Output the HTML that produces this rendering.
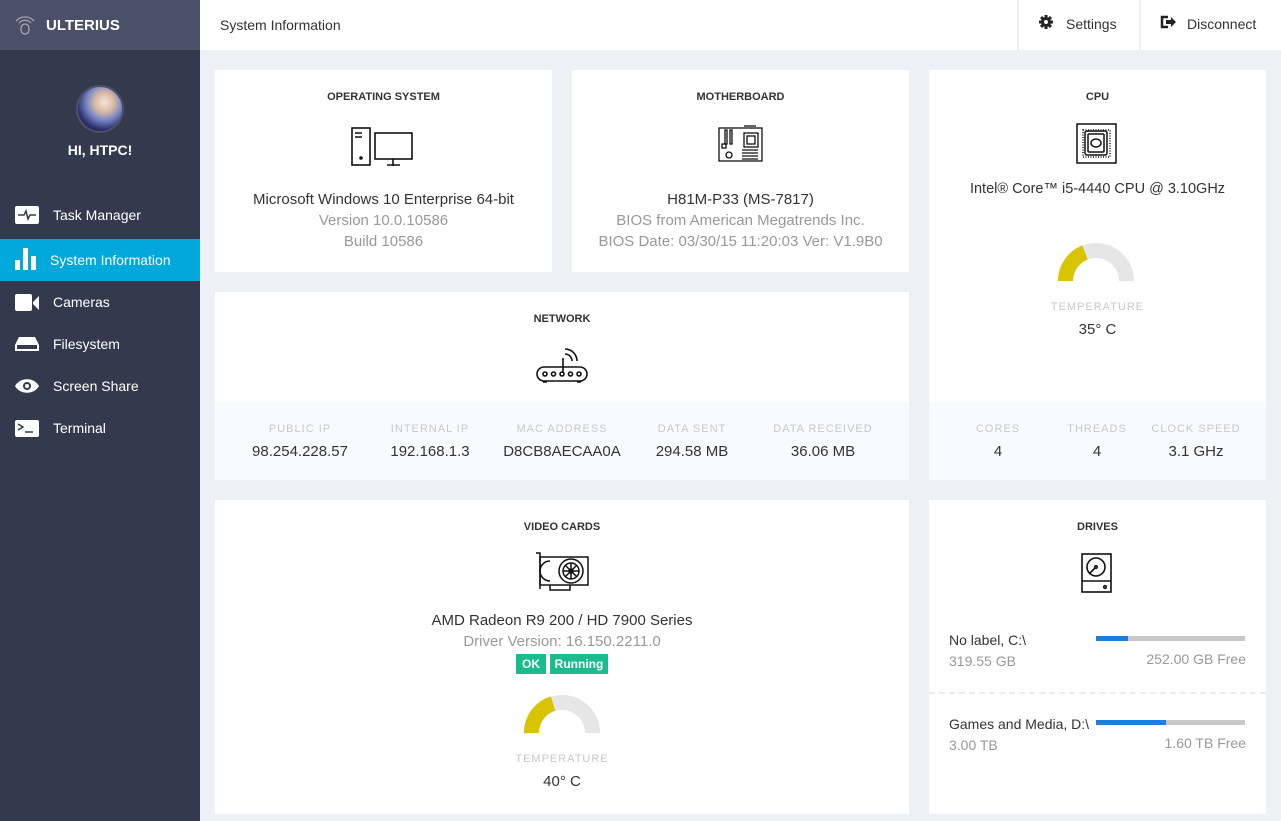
<!DOCTYPE html>
<html><head><meta charset="utf-8"><style>
*{margin:0;padding:0;box-sizing:border-box}
body{width:1281px;height:821px;overflow:hidden;background:#edf1f5;font-family:"Liberation Sans",sans-serif;color:#333;position:relative}
.abs{position:absolute}
#side{left:0;top:0;width:200px;height:821px;background:#343a4d}
#logo{left:0;top:0;width:200px;height:50px;background:#4a5068;color:#fff;font-weight:bold;font-size:15px}
#top{left:200px;top:0;width:1081px;height:50px;background:#fff}
.nav{position:absolute;left:0;width:200px;height:42px;color:#fff;font-size:14px;line-height:42px}
.nav span{position:absolute;left:53px}
.card{position:absolute;background:#fff}
.t{position:absolute;left:0;right:0;text-align:center;font-size:11px;font-weight:bold;color:#333}
.c{position:absolute;left:0;right:0;text-align:center;font-size:15px;color:#333}
.g{color:#999}
.lbl{font-size:11px;letter-spacing:1px;color:#c8c8c8;text-align:center}
.val{font-size:15px;color:#333;text-align:center;margin-top:8px}
</style></head><body>
<div id="side" class="abs"></div>
<div id="logo" class="abs">
<svg class="abs" style="left:14px;top:13px" width="22" height="22" viewBox="0 0 22 22" fill="none" stroke="#aab" stroke-width="1.2"><path d="M2 8a12 12 0 0 1 18 0M5 10a8 8 0 0 1 12 0"/><rect x="7" y="11" width="8" height="10" rx="4"/></svg>
<span class="abs" style="left:46px;top:17px">ULTERIUS</span></div>
<div class="abs" style="left:76px;top:85px;width:48px;height:48px;border-radius:50%;border:2px solid #4a5068;background:radial-gradient(circle at 60% 35%,#f3e6d8 0,#d9b8a0 25%,#7a88c8 45%,#2b2f6a 70%,#1a1c40 100%)"></div>
<div class="abs" style="left:0;width:200px;top:142px;text-align:center;color:#fff;font-size:14px;font-weight:bold">HI, HTPC!</div>
<div class="nav" style="top:194px"><svg class="abs" style="left:15px;top:12px" width="24" height="18"><rect width="24" height="18" rx="2" fill="#fff"/><path d="M3 9h6l2-4 2 8 2-4h6" stroke="#343a4d" stroke-width="1.5" fill="none"/></svg><span>Task Manager</span></div>
<div class="nav" style="top:239px;background:#00a8dc"><svg class="abs" style="left:15px;top:9px" width="22" height="22" fill="#fff"><rect x="0" y="12" width="5" height="10"/><rect x="8" y="0" width="5" height="22"/><rect x="16" y="8" width="5" height="14"/></svg><span style="left:50px">System Information</span></div>
<div class="nav" style="top:281px"><svg class="abs" style="left:15px;top:13px" width="24" height="17" fill="#fff"><rect width="17" height="17" rx="2"/><path d="M18 8l6-6v14l-6-6z"/></svg><span>Cameras</span></div>
<div class="nav" style="top:323px"><svg class="abs" style="left:15px;top:14px" width="24" height="14"><path d="M4 0h16l4 8v6H0V8z" fill="#fff"/><rect x="2" y="8" width="20" height="4" fill="#343a4d"/></svg><span>Filesystem</span></div>
<div class="nav" style="top:365px"><svg class="abs" style="left:15px;top:14px" width="24" height="14"><path d="M0 7C5-2 19-2 24 7 19 16 5 16 0 7z" fill="#fff"/><circle cx="12" cy="7" r="4" fill="#343a4d"/><circle cx="12" cy="7" r="2" fill="#fff"/></svg><span>Screen Share</span></div>
<div class="nav" style="top:407px"><svg class="abs" style="left:15px;top:13px" width="24" height="17"><rect width="24" height="17" rx="2" fill="#fff"/><path d="M3 4l5 3-5 3M10 12h8" stroke="#343a4d" stroke-width="1.5" fill="none"/></svg><span>Terminal</span></div>

<div id="top" class="abs"><span class="abs" style="left:20px;top:17px;font-size:14px">System Information</span>
<div class="abs" style="left:817px;top:0;width:2px;height:50px;background:#edf1f5"></div>
<div class="abs" style="left:939px;top:0;width:2px;height:50px;background:#edf1f5"></div>
<svg class="abs" style="left:839px;top:15px" width="14" height="14" viewBox="0 0 14 14"><g fill="#222"><rect x="5.5" y="0" width="3" height="14"/><rect x="0" y="5.5" width="14" height="3"/><rect x="5.5" y="0" width="3" height="14" transform="rotate(45 7 7)"/><rect x="5.5" y="0" width="3" height="14" transform="rotate(-45 7 7)"/><circle cx="7" cy="7" r="5"/></g><circle cx="7" cy="7" r="2" fill="#fff"/></svg>
<span class="abs" style="left:866px;top:16px;font-size:14px">Settings</span>
<svg class="abs" style="left:960px;top:15px" width="16" height="14"><path d="M8 2H2v10h6" stroke="#222" stroke-width="2.5" fill="none"/><path d="M6 5h5V2l5 5-5 5V9H6z" fill="#222"/></svg>
<span class="abs" style="left:987px;top:16px;font-size:14px">Disconnect</span></div>

<div class="card" style="left:215px;top:70px;width:337px;height:202px">
<div class="t" style="top:21px">OPERATING SYSTEM</div>
<svg class="abs" style="left:136px;top:57px" width="64" height="40" fill="none" stroke="#111" stroke-width="1.6"><rect x="1" y="1" width="18" height="37"/><path d="M4 6h7M4 10h7"/><circle cx="10" cy="31" r="1" fill="#111"/><rect x="24" y="6" width="37" height="26"/><path d="M42 32v7M36 38h13"/></svg>
<div class="c" style="top:121px">Microsoft Windows 10 Enterprise 64-bit</div>
<div class="c g" style="top:142px">Version 10.0.10586</div>
<div class="c g" style="top:163px">Build 10586</div></div>

<div class="card" style="left:572px;top:70px;width:337px;height:202px">
<div class="t" style="top:21px">MOTHERBOARD</div>
<svg class="abs" style="left:146px;top:54px" width="45" height="38" fill="none" stroke="#111" stroke-width="1.3"><rect x="1" y="4" width="43" height="33"/><path d="M26 2h12"/><rect x="7" y="6" width="2" height="14"/><rect x="12" y="6" width="2" height="14"/><rect x="26" y="9" width="14" height="14"/><rect x="29" y="12" width="8" height="8"/><rect x="4" y="20" width="4" height="4"/><circle cx="11" cy="31" r="3"/><path d="M24 26h16M24 29h16M24 32h16M24 35h16"/></svg>
<div class="c" style="top:121px">H81M-P33 (MS-7817)</div>
<div class="c g" style="top:142px">BIOS from American Megatrends Inc.</div>
<div class="c g" style="top:163px">BIOS Date: 03/30/15 11:20:03 Ver: V1.9B0</div></div>

<div class="card" style="left:929px;top:70px;width:337px;height:410px">
<div class="t" style="top:21px">CPU</div>
<svg class="abs" style="left:147px;top:53px" width="41" height="41" fill="none" stroke="#111" stroke-width="1.5"><rect x="1" y="1" width="39" height="39"/><rect x="7" y="7" width="27" height="27" stroke-dasharray="1 1.5"/><rect x="9" y="8" width="22" height="24" rx="2"/><rect x="12" y="11" width="16" height="18" rx="1"/><ellipse cx="20" cy="20" rx="5" ry="4"/></svg>
<div class="c" style="top:111px;font-size:14.5px">Intel® Core™ i5-4440 CPU @ 3.10GHz</div>
<svg class="abs" style="left:129px;top:172px" width="78" height="40"><path d="M7.5 39a30.5 30.5 0 0 1 61 0" stroke="#e6e6e6" stroke-width="15" fill="none"/><path d="M7.5 39A30.5 30.5 0 0 1 27 10.5" stroke="#d9c400" stroke-width="15" fill="none"/></svg>
<div class="abs lbl" style="left:0;right:0;top:231px">TEMPERATURE</div>
<div class="c" style="top:251px">35° C</div>
<div class="abs" style="left:0;top:332px;width:337px;height:78px;background:#f9fafc"></div>
<div class="abs" style="left:24px;top:353px;width:90px"><div class="lbl">CORES</div><div class="val">4</div></div>
<div class="abs" style="left:123px;top:353px;width:90px"><div class="lbl">THREADS</div><div class="val">4</div></div>
<div class="abs" style="left:222px;top:353px;width:90px"><div class="lbl">CLOCK SPEED</div><div class="val">3.1 GHz</div></div></div>

<div class="card" style="left:215px;top:292px;width:694px;height:188px">
<div class="t" style="top:21px">NETWORK</div>
<svg class="abs" style="left:320px;top:52px" width="55" height="42" fill="none" stroke="#111" stroke-width="1.6"><path d="M30 5a12 12 0 0 1 12 12M30 10a7 7 0 0 1 7 7M28 14v15"/><rect x="2" y="23" width="50" height="14" rx="7"/><circle cx="10" cy="30" r="2"/><circle cx="18.5" cy="30" r="2"/><circle cx="27" cy="30" r="2"/><circle cx="35.5" cy="30" r="2"/><circle cx="44" cy="30" r="2"/><path d="M8 38h4M42 38h4"/></svg>
<div class="abs" style="left:0;top:110px;width:694px;height:78px;background:#f9fafc"></div>
<div class="abs" style="left:25px;top:131px;width:120px"><div class="lbl">PUBLIC IP</div><div class="val">98.254.228.57</div></div>
<div class="abs" style="left:155px;top:131px;width:120px"><div class="lbl">INTERNAL IP</div><div class="val">192.168.1.3</div></div>
<div class="abs" style="left:282px;top:131px;width:130px"><div class="lbl">MAC ADDRESS</div><div class="val">D8CB8AECAA0A</div></div>
<div class="abs" style="left:417px;top:131px;width:120px"><div class="lbl">DATA SENT</div><div class="val">294.58 MB</div></div>
<div class="abs" style="left:548px;top:131px;width:120px"><div class="lbl">DATA RECEIVED</div><div class="val">36.06 MB</div></div></div>

<div class="card" style="left:215px;top:500px;width:694px;height:314px">
<div class="t" style="top:21px">VIDEO CARDS</div>
<svg class="abs" style="left:319px;top:51px" width="56" height="40" fill="none" stroke="#111" stroke-width="1.5"><path d="M2 2h4v36"/><rect x="6" y="6" width="48" height="28"/><path d="M16 34v5h20v-5"/><path d="M16 10a10 10 0 0 0 0 20"/><circle cx="37" cy="20" r="12"/><circle cx="37" cy="20" r="8"/><circle cx="37" cy="20" r="2"/><path d="M37 12v16M29 20h16M31 14l12 12M43 14l-12 12"/></svg>
<div class="c" style="top:112px">AMD Radeon R9 200 / HD 7900 Series</div>
<div class="c g" style="top:133px">Driver Version: 16.150.2211.0</div>
<div class="abs" style="left:301px;top:154px;width:30px;height:20px;background:#1bbc8b;color:#fff;font-size:12px;font-weight:bold;text-align:center;line-height:20px">OK</div>
<div class="abs" style="left:335px;top:154px;width:58px;height:20px;background:#1bbc8b;color:#fff;font-size:12px;font-weight:bold;text-align:center;line-height:20px">Running</div>
<svg class="abs" style="left:309px;top:194px" width="78" height="40"><path d="M7.5 39a30.5 30.5 0 0 1 61 0" stroke="#e6e6e6" stroke-width="15" fill="none"/><path d="M7.5 39A30.5 30.5 0 0 1 29 9.5" stroke="#d9c400" stroke-width="15" fill="none"/></svg>
<div class="abs lbl" style="left:0;right:0;top:253px">TEMPERATURE</div>
<div class="c" style="top:273px">40° C</div></div>

<div class="card" style="left:929px;top:500px;width:337px;height:314px">
<div class="t" style="top:21px">DRIVES</div>
<svg class="abs" style="left:152px;top:53px" width="32" height="40" fill="none" stroke="#111" stroke-width="1.6"><rect x="1" y="1" width="29" height="38"/><path d="M1 28h29"/><circle cx="15" cy="14" r="9"/><circle cx="15" cy="14" r="1.3"/><path d="M14 15l-6 6"/><circle cx="24" cy="34" r="1.3"/></svg>
<div class="abs" style="left:20px;top:132px;font-size:14px">No label, C:\</div>
<div class="abs g" style="left:20px;top:153px;font-size:14px">319.55 GB</div>
<div class="abs" style="left:167px;top:136px;width:149px;height:5px;background:#c8c8c8"><div style="width:32px;height:5px;background:#1e7ee0"></div></div>
<div class="abs g" style="right:20px;top:151px;font-size:14px">252.00 GB Free</div>
<div class="abs" style="left:0;top:192px;width:337px;border-top:2px dashed #e8ebef"></div>
<div class="abs" style="left:20px;top:216px;font-size:14px">Games and Media, D:\</div>
<div class="abs g" style="left:20px;top:237px;font-size:14px">3.00 TB</div>
<div class="abs" style="left:167px;top:220px;width:149px;height:5px;background:#c8c8c8"><div style="width:70px;height:5px;background:#1e7ee0"></div></div>
<div class="abs g" style="right:20px;top:235px;font-size:14px">1.60 TB Free</div></div>
</body></html>
